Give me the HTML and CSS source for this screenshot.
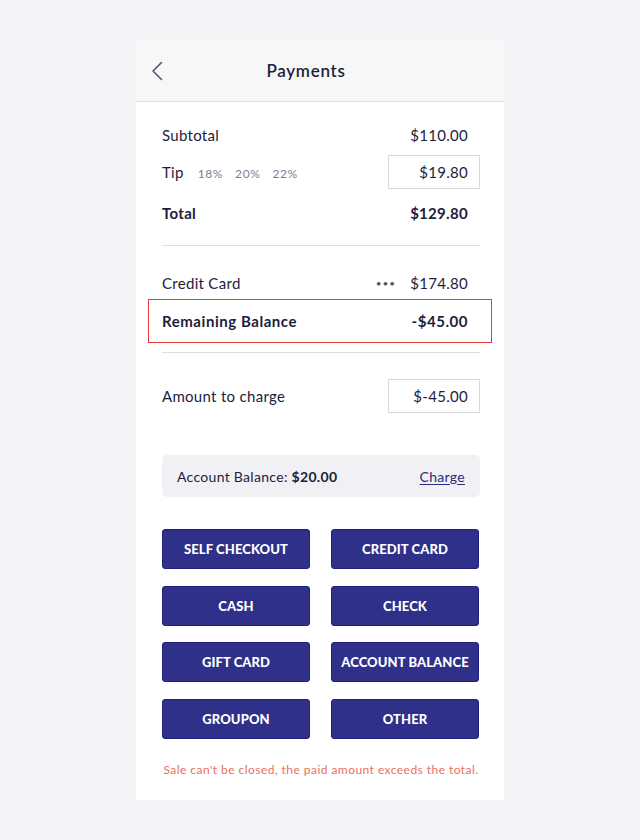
FILE: index.html
```html
<!DOCTYPE html>
<html>
<head>
<meta charset="utf-8">
<link rel="stylesheet" href="styles.css">
</head>
<body>
<div class="card">
  <header class="header">
    <button class="back" aria-label="Back">
      <svg width="12" height="20" viewBox="0 0 12 20"><path d="M10.5 1.5 L2 10 L10.5 18.5" fill="none" stroke="#55556e" stroke-width="1.6" stroke-linecap="round" stroke-linejoin="round"/></svg>
    </button>
    <h1 class="title">Payments</h1>
    <span class="spacer"></span>
  </header>
  <main class="content">
    <div class="row r-subtotal"><span>Subtotal</span><span>$110.00</span></div>
    <div class="row r-tip">
      <span class="tip-label">Tip <span class="pct">18%</span><span class="pct">20%</span><span class="pct">22%</span></span>
      <span class="input">$19.80</span>
    </div>
    <div class="row r-total bold"><span>Total</span><span>$129.80</span></div>
    <div class="divider d1"></div>
    <div class="row r-cc"><span>Credit Card</span><span class="cc-right"><span class="dots">•••</span>$174.80</span></div>
    <div class="row r-remaining bold"><span>Remaining Balance</span><span>-$45.00</span></div>
    <div class="divider d2"></div>
    <div class="row r-amount"><span>Amount to charge</span><span class="input">$-45.00</span></div>
    <div class="account"><span>Account Balance: <b>$20.00</b></span><a class="charge" href="#">Charge</a></div>
    <div class="buttons">
      <button class="pay">SELF CHECKOUT</button>
      <button class="pay">CREDIT CARD</button>
      <button class="pay">CASH</button>
      <button class="pay">CHECK</button>
      <button class="pay">GIFT CARD</button>
      <button class="pay">ACCOUNT BALANCE</button>
      <button class="pay">GROUPON</button>
      <button class="pay">OTHER</button>
    </div>
    <p class="error">Sale can't be closed, the paid amount exceeds the total.</p>
  </main>
</div>
</body>
</html>
```
FILE: styles.css
```css
* { box-sizing: border-box; }
html, body { margin: 0; padding: 0; }
body {
  background: #f2f2f7;
  font-family: Lato, "Noto Sans", sans-serif;
  color: #1d1d3c;
  padding-top: 40px;
}
.card {
  width: 368px;
  height: 760px;
  margin: 0 0 0 136px;
  background: #fff;
}
.header {
  height: 62px;
  background: #f7f7f7;
  border-bottom: 1.5px solid #e3e3e6;
  display: grid;
  grid-template-columns: 50px 1fr 78px;
  align-items: center;
}
.back {
  border: 0;
  background: none;
  padding: 0 0 0 15px;
  height: 20px;
  display: flex;
  align-items: center;
}
.title {
  margin: 0;
  text-align: center;
  font-size: 17px;
  font-weight: 600;
  letter-spacing: 0.7px;
  color: #1d1d3c;
}
.content {
  padding: 16px 24px 0 26px;
}
.row {
  display: flex;
  justify-content: space-between;
  align-items: center;
  height: 34px;
  font-size: 15px;
  letter-spacing: 0.3px;
  padding-right: 12px;
}
.bold { font-weight: 700; }
.r-remaining.bold { letter-spacing: 0.55px; }
.r-tip { margin-top: 3px; padding-right: 0; }
.r-total { margin-top: 7px; }
.tip-label { display: flex; align-items: baseline; }
.pct {
  font-size: 12px;
  color: #7d7d92;
  margin-left: 12px;
  letter-spacing: 0.6px;
}
.pct:first-child { margin-left: 14px; }
.input {
  width: 92px;
  height: 34px;
  border: 1px solid #d9d9dd;
  display: flex;
  align-items: center;
  justify-content: flex-end;
  padding-right: 11px;
}
.divider {
  height: 1px;
  background: #dedee2;
}
.d1 { margin-top: 15px; }
.r-cc { margin-top: 20px; height: 33px; }
.cc-right { display: flex; align-items: center; }
.dots {
  font-size: 10px;
  letter-spacing: 1px;
  color: #55556e;
  margin-right: 14px;
}
.r-remaining {
  height: 44px;
  margin: 0 -12px 0 -14px;
  padding: 0 23px 0 13px;
  border: 1.5px solid #ea3b3b;
}
.d2 { margin-top: 9px; }
.r-amount { margin-top: 26px; padding-right: 0; }
.account {
  margin-top: 42px;
  height: 42px;
  background: #f0f0f5;
  border-radius: 5px;
  display: flex;
  align-items: center;
  justify-content: space-between;
  padding: 0 15px;
  font-size: 14px;
  letter-spacing: 0.3px;
}
.account b { font-weight: 700; }
.charge {
  color: #2a2c7c;
  text-decoration: underline;
  text-underline-offset: 2px;
}
.buttons {
  margin-top: 32px;
  display: grid;
  grid-template-columns: 148px 148px;
  column-gap: 21px;
  row-gap: 16.5px;
}
.pay {
  height: 40px;
  background: #2e308a;
  border: 1px solid #1f2180;
  border-radius: 3px;
  color: #fff;
  font-family: Lato, "Noto Sans", sans-serif;
  font-weight: 900;
  font-size: 13px;
  letter-spacing: 0.1px;
  padding: 0;
}
.error {
  margin: 23px 0 0 0;
  text-align: center;
  font-size: 12px;
  color: #e96f5e;
  letter-spacing: 0.45px;
}
```
